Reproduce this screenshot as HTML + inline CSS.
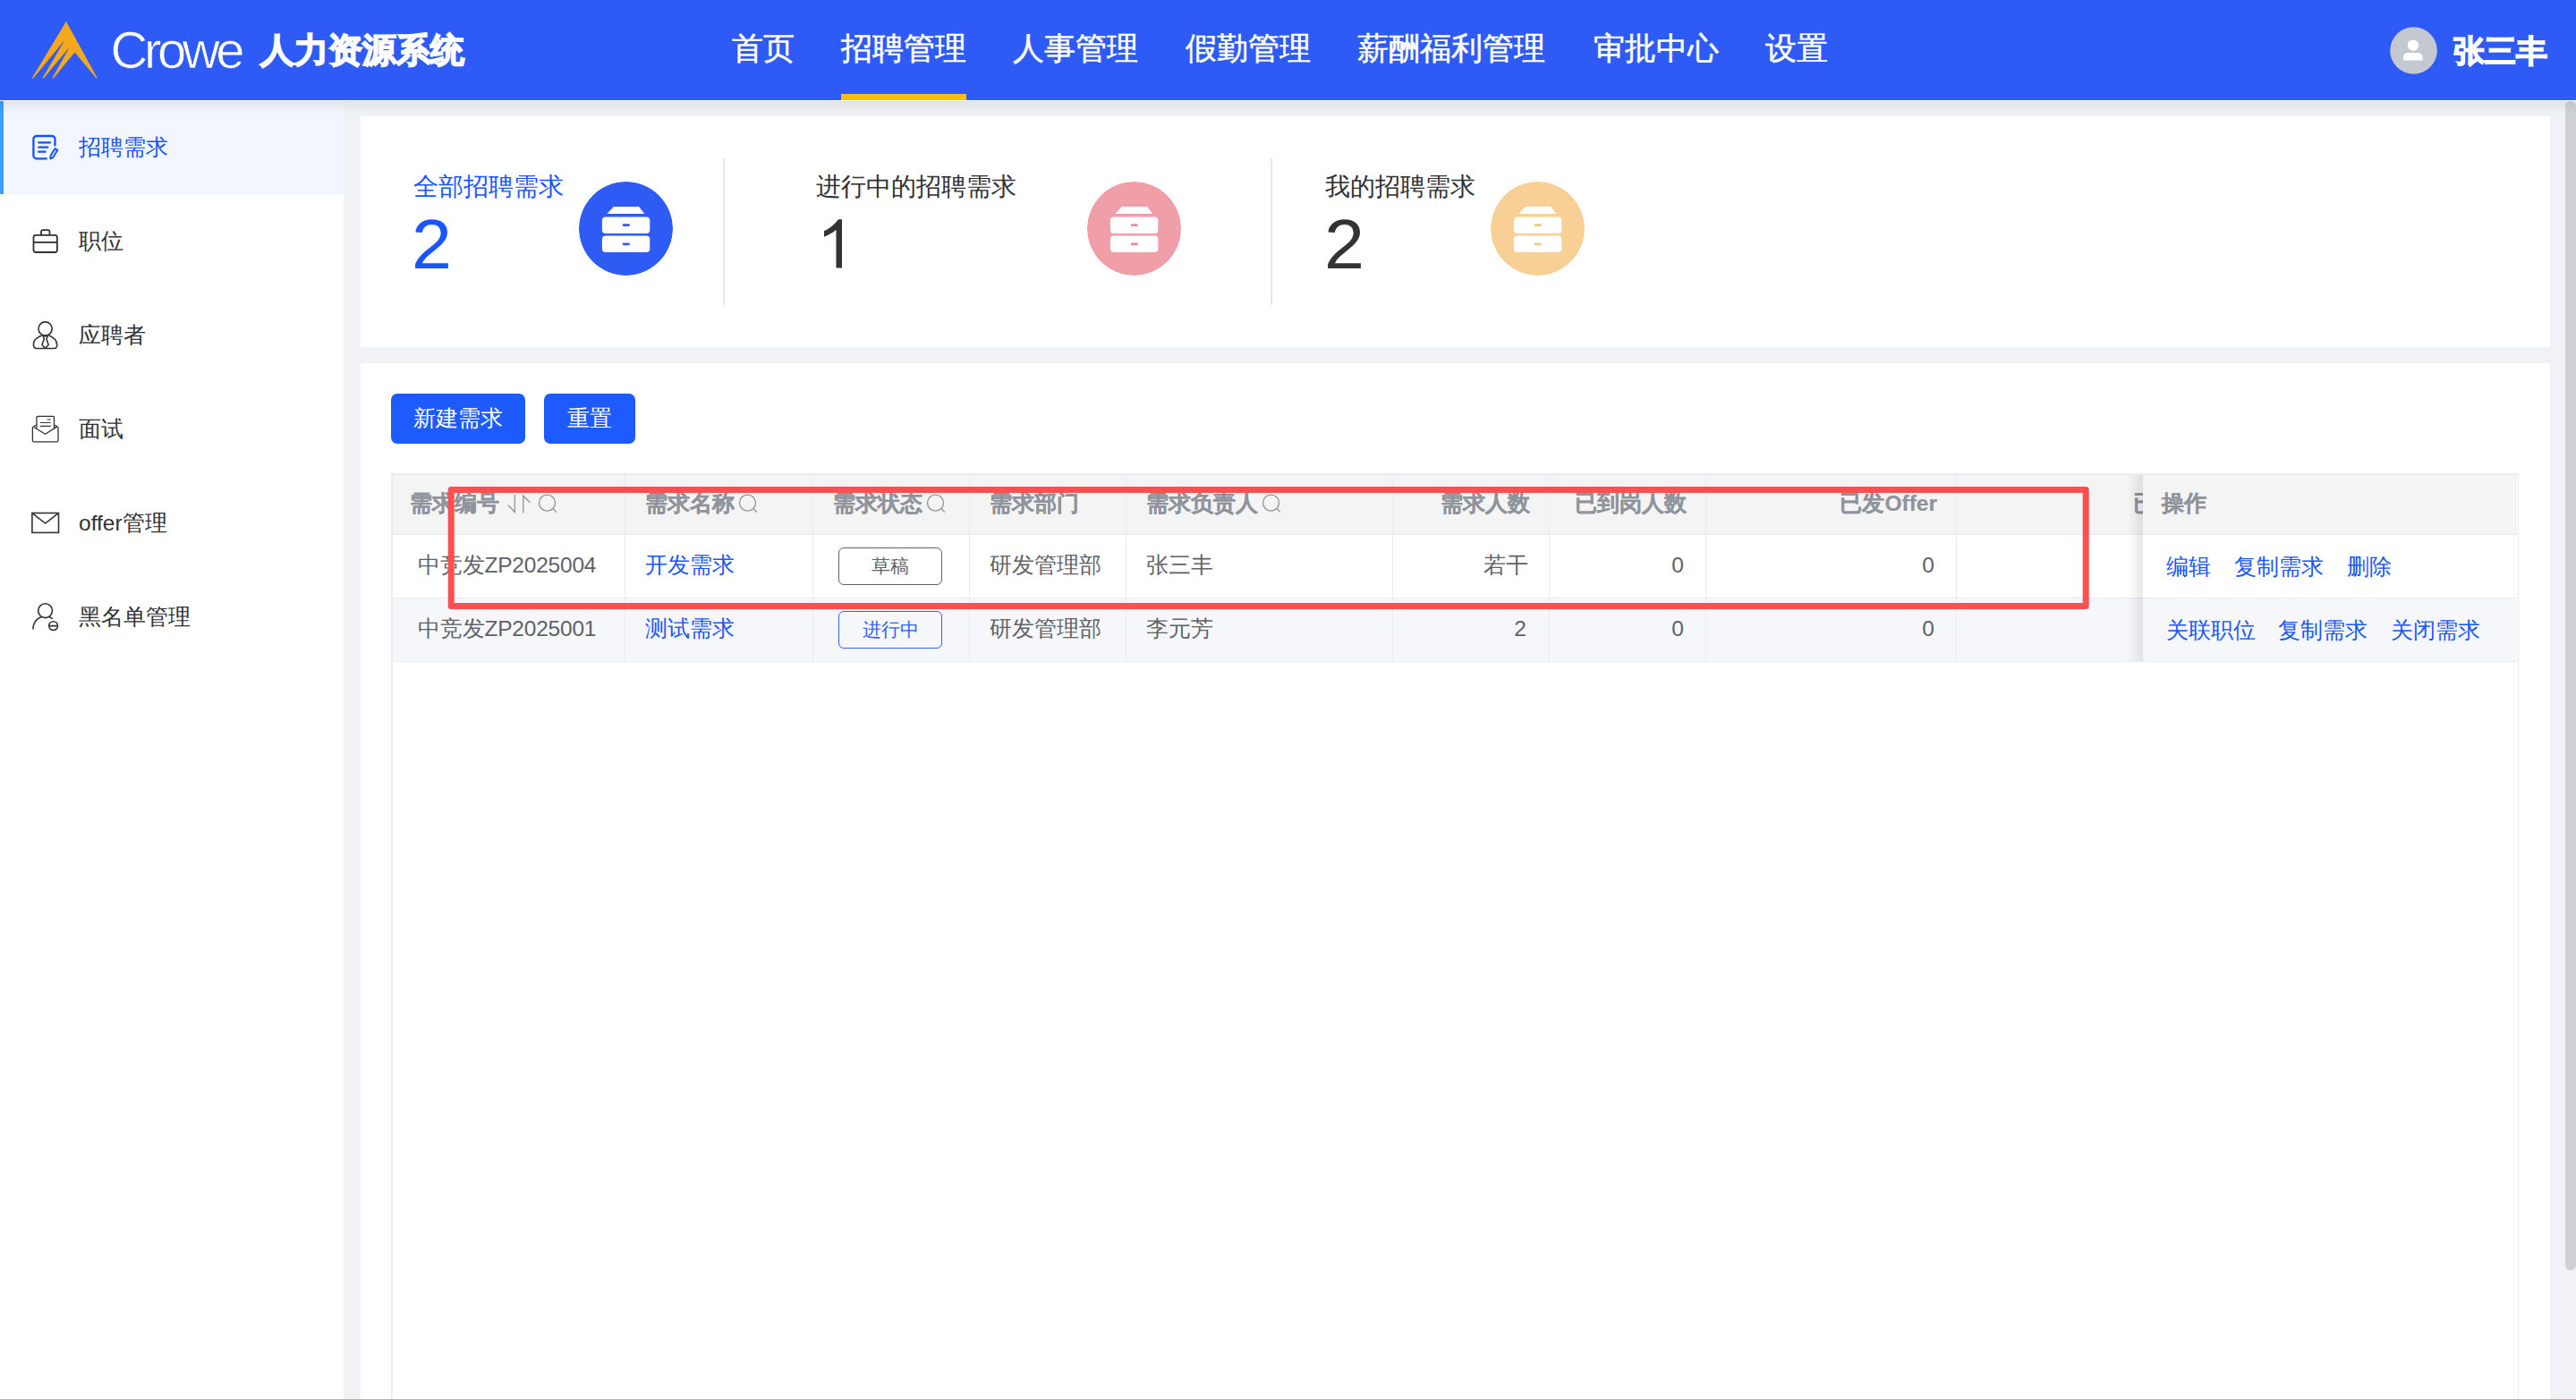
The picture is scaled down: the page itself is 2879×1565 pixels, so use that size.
<!DOCTYPE html>
<html><head><meta charset="utf-8">
<style>
*{box-sizing:border-box;margin:0;padding:0}
html,body{width:2879px;height:1565px;overflow:hidden;background:#f0f2f5;font-family:"Liberation Sans",sans-serif;}
.abs{position:absolute}
#hdr{position:absolute;left:0;top:0;width:2879px;height:112px;background:#2e5bf6;}
.nav{position:absolute;top:29px;font-size:35px;line-height:50px;color:#fff;white-space:nowrap;-webkit-text-stroke:0.5px #fff}
#shadow{position:absolute;left:0;top:112px;width:2879px;height:16px;background:linear-gradient(rgba(255,255,255,0.9) 0px,rgba(255,255,255,0.9) 1px,rgba(0,0,0,0.065) 1px,rgba(0,0,0,0) 16px);z-index:5}
#side{position:absolute;left:0;top:112px;width:384px;height:1453px;background:#fff}
.si{position:absolute;left:0;width:384px;height:105px}
.si .t{position:absolute;left:88px;top:0;line-height:105px;font-size:24.5px;color:#303133;white-space:nowrap}
.si svg{position:absolute;left:30px;width:45px;height:45px}
.card{position:absolute;left:403px;width:2447px;background:#fff}
.stt{position:absolute;font-size:28px;line-height:40px;color:#303133;white-space:nowrap}
.stn{position:absolute;font-size:78px;line-height:90px;color:#333;white-space:nowrap}
.circ{position:absolute;width:105px;height:105px;border-radius:50%}
.vd{position:absolute;width:2px;top:177px;height:164px;background:#e8e8e8}
.btn{position:absolute;top:440px;height:56px;border-radius:7px;background:#1e5bff;color:#fff;font-size:24.5px;line-height:56px;text-align:center}
.th{position:absolute;top:529px;height:68px;font-size:24.5px;font-weight:bold;color:#8f939b;line-height:68px;white-space:nowrap;-webkit-text-stroke:0.2px #8f939b}
.td{position:absolute;font-size:24.5px;color:#606266;line-height:70px;white-space:nowrap}
.lk{color:#1a56ff}
.vl{position:absolute;width:1px;background:#e8ebf3}
.hl{position:absolute;height:1px;background:#e8ebf3}
</style></head><body>
<div id="hdr">
  <svg class="abs" style="left:0;top:0" width="140" height="112" viewBox="0 0 140 112">
    <polygon fill="#f5a81c" points="74,24 108.9,87.6 107.7,87.6 83.6,58.6 59.8,87.6 58.3,87.6 77.8,52.6 48.8,87.6 47.3,87.6 72.7,44.2 37.2,87.6 35.6,87.6"/>
  </svg>
  <svg class="abs" style="left:0;top:0" width="300" height="112"><text x="123.5" y="76.2" font-family="Liberation Sans" font-size="58" textLength="150" lengthAdjust="spacing" fill="#fff" stroke="#2e5bf6" stroke-width="0.7">Crowe</text></svg>
  <div class="abs" style="left:291px;top:30.5px;font-size:37.8px;line-height:50px;color:#fff;font-weight:bold;-webkit-text-stroke:1.6px #fff">人力资源系统</div>
  <div class="nav" style="left:818px">首页</div>
  <div class="nav" style="left:940px">招聘管理</div>
  <div class="abs" style="left:940px;top:105px;width:140px;height:7px;background:#fcbf06"></div>
  <div class="nav" style="left:1132px">人事管理</div>
  <div class="nav" style="left:1325px">假勤管理</div>
  <div class="nav" style="left:1517px">薪酬福利管理</div>
  <div class="nav" style="left:1781px">审批中心</div>
  <div class="nav" style="left:1973px">设置</div>
  <svg class="abs" style="left:2671px;top:30px" width="53" height="53" viewBox="0 0 53 53">
    <circle cx="26.5" cy="26.5" r="26.3" fill="#c4c8d0"/>
    <circle cx="26" cy="20.7" r="6.2" fill="#fff"/>
    <path d="M15 37.5 V34 a5 5 0 0 1 5 -5 H31.5 a5 5 0 0 1 5 5 V37.5 Z" fill="#fff"/>
  </svg>
  <div class="abs" style="left:2741.5px;top:31.5px;font-size:35px;line-height:50px;color:#fff;font-weight:bold;-webkit-text-stroke:1.4px #fff">张三丰</div>
</div>
<div id="shadow"></div>
<div id="side">
  <div class="si" style="top:0;background:#f2f7ff"><div class="abs" style="left:0;top:0;width:4px;height:105px;background:#409eff"></div>
    <svg style="top:28px" viewBox="0 0 45 45" fill="none" stroke="#1652ff" stroke-width="2.3" stroke-linecap="round" stroke-linejoin="round">
      <path d="M31.5 22.5 V15.5 a3.5 3.5 0 0 0 -3.5 -3.5 H10.9 a3.5 3.5 0 0 0 -3.5 3.5 V33.8 a3.5 3.5 0 0 0 3.5 3.5 H21.9"/>
      <path d="M13.2 19.3 H26 M13.2 24.6 H23.3 M13.2 29.7 H20.6"/>
      <path d="M31.5 26 L34.3 27.8 L29.3 36 L26.4 37.3 L26.5 34.2 Z" stroke-width="2"/>
    </svg>
    <div class="t" style="color:#1652ff">招聘需求</div></div>
  <div class="si" style="top:105px">
    <svg style="top:28px" viewBox="0 0 45 45" fill="none" stroke="#2f3133" stroke-width="1.8">
      <rect x="7.5" y="17.8" width="26.4" height="19.2" rx="2.5"/>
      <path d="M7.5 25.9 H33.9"/>
      <path d="M16 17.8 V14.2 a2 2 0 0 1 2 -2 H23.5 a2 2 0 0 1 2 2 V17.8"/>
    </svg>
    <div class="t">职位</div></div>
  <div class="si" style="top:210px">
    <svg style="top:28px" viewBox="0 0 45 45" fill="none" stroke="#333" stroke-width="1.6" stroke-linejoin="round">
      <circle cx="20.6" cy="17.5" r="7.6"/>
      <path d="M17.4 24.7 C11 27 7 31 7.4 35.4 C7.6 38 9 39.5 11 39.5 H30.5 C32.5 39.5 34 38 33.8 35.4 C33.5 31 30 27 24.4 24.7"/>
      <path d="M18.3 25.8 H23.3 L21.9 29 L24.2 35.5 L20.6 39.2 L17 35.5 L19.3 29 Z"/>
    </svg>
    <div class="t">应聘者</div></div>
  <div class="si" style="top:315px">
    <svg style="top:28px" viewBox="0 0 45 45" fill="none" stroke="#333" stroke-width="1.3" stroke-linejoin="round">
      <path d="M10.9 24 V11.8 a1.5 1.5 0 0 1 1.5 -1.5 H29 a1.5 1.5 0 0 1 1.5 1.5 V24"/>
      <path d="M22.5 14 H26.7 M14.8 17.5 H26.7 M14.8 21.4 H26.7" stroke-width="1.2"/>
      <path d="M10.9 20 L7.3 22 a1.5 1.5 0 0 0 -0.9 1.4 V37.4 a1.5 1.5 0 0 0 1.5 1.5 H33.5 a1.5 1.5 0 0 0 1.5 -1.5 V23.4 a1.5 1.5 0 0 0 -0.9 -1.4 L30.5 20"/>
      <path d="M7.7 22.5 L20.6 30.2 L34 21.9"/>
    </svg>
    <div class="t">面试</div></div>
  <div class="si" style="top:420px">
    <svg style="top:28px" viewBox="0 0 45 45" fill="none" stroke="#333" stroke-width="1.6">
      <rect x="5.9" y="13.5" width="29.6" height="21.9"/>
      <path d="M6.4 13.8 L20.6 25.1 L35 13.8"/>
    </svg>
    <div class="t">offer管理</div></div>
  <div class="si" style="top:525px">
    <svg style="top:28px" viewBox="0 0 45 45" fill="none" stroke="#333" stroke-width="1.6" stroke-linecap="round">
      <circle cx="20.6" cy="17.7" r="7.9"/>
      <path d="M15.75 24.75 C10 27 7.2 32 6.9 37.9"/>
      <path d="M25.4 24.75 L28.3 26.4"/>
      <circle cx="29.6" cy="34.6" r="4.9"/>
      <path d="M25.7 34.6 H33.6"/>
    </svg>
    <div class="t">黑名单管理</div></div>
</div>

<div class="card" style="top:130px;height:258px"></div>
<div class="card" style="top:406px;height:1159px"></div>

<!-- stats -->
<div class="stt" style="left:462px;top:189px;color:#1a56ff">全部招聘需求</div>
<div class="stn" style="left:460px;top:228px;color:#1a56ff;transform:scaleX(1.035);transform-origin:0 0">2</div>
<svg class="circ" style="left:647px;top:203px" viewBox="0 0 105 105"><circle cx="52.5" cy="52.5" r="52.5" fill="#2f5bf5"/><g transform="translate(-2,-3)"><g fill="#fff"><path d="M40.9 31 H69.1 L75.4 38.9 H33.4 Z"/><rect x="27.9" y="42.4" width="53.4" height="18.5" rx="4"/><rect x="27.9" y="63.6" width="53.4" height="18.5" rx="4"/></g><g fill="#2f5bf5"><rect x="50.7" y="50.3" width="8.2" height="2.7" rx="1.3"/><rect x="50.7" y="71.5" width="8.2" height="2.7" rx="1.3"/></g></g></svg>
<div class="vd" style="left:808px"></div>
<div class="stt" style="left:912px;top:189px">进行中的招聘需求</div>
<svg class="abs" style="left:905px;top:235px" width="60" height="75" viewBox="0 0 60 75"><path fill="#333" d="M29.5 64.5 V22 C25 25.5 20.5 28 16 29.7 V23.3 C22 20.5 28.5 15 32.1 10.2 H36 V64.5 Z"/></svg>
<svg class="circ" style="left:1215px;top:203px" viewBox="0 0 105 105"><circle cx="52.5" cy="52.5" r="52.5" fill="#f09ea8"/><g transform="translate(-2,-3)"><g fill="#fff"><path d="M40.9 31 H69.1 L75.4 38.9 H33.4 Z"/><rect x="27.9" y="42.4" width="53.4" height="18.5" rx="4"/><rect x="27.9" y="63.6" width="53.4" height="18.5" rx="4"/></g><g fill="#ee8a96"><rect x="50.7" y="50.3" width="8.2" height="2.7" rx="1.3"/><rect x="50.7" y="71.5" width="8.2" height="2.7" rx="1.3"/></g></g></svg>
<div class="vd" style="left:1420px"></div>
<div class="stt" style="left:1481px;top:189px">我的招聘需求</div>
<div class="stn" style="left:1480px;top:228px;transform:scaleX(1.035);transform-origin:0 0">2</div>
<svg class="circ" style="left:1666px;top:203px" viewBox="0 0 105 105"><circle cx="52.5" cy="52.5" r="52.5" fill="#f8d095"/><g transform="translate(-2,-3)"><g fill="#fff"><path d="M40.9 31 H69.1 L75.4 38.9 H33.4 Z"/><rect x="27.9" y="42.4" width="53.4" height="18.5" rx="4"/><rect x="27.9" y="63.6" width="53.4" height="18.5" rx="4"/></g><g fill="#f5c57e"><rect x="50.7" y="50.3" width="8.2" height="2.7" rx="1.3"/><rect x="50.7" y="71.5" width="8.2" height="2.7" rx="1.3"/></g></g></svg>

<!-- buttons -->
<div class="btn" style="left:437px;width:150px">新建需求</div>
<div class="btn" style="left:608px;width:102px">重置</div>

<!-- table -->
<div class="abs" style="left:437px;top:529px;width:2378px;height:1036px;background:#fff;border-left:2px solid #e9edf6;border-right:1px solid #e9edf6;border-top:2px solid #e9edf6"></div>
<div class="abs" style="left:439px;top:531px;width:2374px;height:66px;background:#f4f4f5"></div>
<div class="abs" style="left:439px;top:668px;width:2374px;height:71px;background:#f5f7fb"></div>
<div class="hl" style="left:439px;top:597px;width:2374px"></div>
<div class="hl" style="left:439px;top:668px;width:2374px"></div>
<div class="hl" style="left:439px;top:739px;width:2374px"></div>
<div class="vl" style="left:698px;top:531px;height:208px"></div>
<div class="vl" style="left:908px;top:531px;height:208px"></div>
<div class="vl" style="left:1083px;top:531px;height:208px"></div>
<div class="vl" style="left:1258px;top:531px;height:208px"></div>
<div class="vl" style="left:1556px;top:531px;height:208px"></div>
<div class="vl" style="left:1731px;top:531px;height:208px"></div>
<div class="vl" style="left:1906px;top:531px;height:208px"></div>
<div class="vl" style="left:2186px;top:531px;height:208px"></div>

<div class="th" style="left:458px">需求编号</div>
<svg class="abs" style="left:560px;top:548px" width="70" height="30" viewBox="560 548 70 30" fill="none" stroke="#8f939b" stroke-width="1.3">
  <path d="M575.4 553 V572.5 L568 564.7"/>
  <path d="M584.8 573.6 V554 L592.4 561.8"/>
  <circle cx="611.5" cy="562.1" r="9"/>
  <path d="M618.2 568.8 L622 572.6"/>
</svg>
<div class="th" style="left:721px">需求名称</div>
<svg class="abs" style="left:820px;top:548px" width="35" height="30" viewBox="0 0 35 30" fill="none" stroke="#8f939b" stroke-width="1.3"><circle cx="15.5" cy="14.1" r="9"/><path d="M22.2 20.8 L26 24.6"/></svg>
<div class="th" style="left:931px">需求状态</div>
<svg class="abs" style="left:1030px;top:548px" width="35" height="30" viewBox="0 0 35 30" fill="none" stroke="#8f939b" stroke-width="1.3"><circle cx="15.5" cy="14.1" r="9"/><path d="M22.2 20.8 L26 24.6"/></svg>
<div class="th" style="left:1106px">需求部门</div>
<div class="th" style="left:1281px">需求负责人</div>
<svg class="abs" style="left:1405px;top:548px" width="35" height="30" viewBox="0 0 35 30" fill="none" stroke="#8f939b" stroke-width="1.3"><circle cx="15.5" cy="14.1" r="9"/><path d="M22.2 20.8 L26 24.6"/></svg>
<div class="th" style="left:1556px;width:154px;text-align:right">需求人数</div>
<div class="th" style="left:1731px;width:154px;text-align:right">已到岗人数</div>
<div class="th" style="left:1906px;width:259px;text-align:right">已发Offer</div>
<div class="th" style="left:2384px;width:11px;overflow:hidden">已</div>

<div class="td" style="left:467px;top:597px;letter-spacing:-0.2px">中竞发ZP2025004</div>
<div class="td lk" style="left:721px;top:597px">开发需求</div>
<div class="abs" style="left:937px;top:612px;width:116px;height:42px;border:1.5px solid #606266;border-radius:6px;font-size:21px;line-height:39px;text-align:center;color:#606266">草稿</div>
<div class="td" style="left:1106px;top:597px">研发管理部</div>
<div class="td" style="left:1281px;top:597px">张三丰</div>
<div class="td" style="left:1556px;top:597px;width:152px;text-align:right">若干</div>
<div class="td" style="left:1731px;top:597px;width:151px;text-align:right">0</div>
<div class="td" style="left:1906px;top:597px;width:256px;text-align:right">0</div>

<div class="td" style="left:467px;top:668px;letter-spacing:-0.2px">中竞发ZP2025001</div>
<div class="td lk" style="left:721px;top:668px">测试需求</div>
<div class="abs" style="left:937px;top:683px;width:116px;height:42px;border:1.5px solid #2d63f5;border-radius:6px;font-size:21px;line-height:39px;text-align:center;color:#2d63f5">进行中</div>
<div class="td" style="left:1106px;top:668px">研发管理部</div>
<div class="td" style="left:1281px;top:668px">李元芳</div>
<div class="td" style="left:1556px;top:668px;width:150px;text-align:right">2</div>
<div class="td" style="left:1731px;top:668px;width:151px;text-align:right">0</div>
<div class="td" style="left:1906px;top:668px;width:256px;text-align:right">0</div>

<!-- fixed column -->
<div class="abs" style="left:2378px;top:531px;width:17px;height:208px;background:linear-gradient(90deg,rgba(0,0,0,0),rgba(0,0,0,0.09))"></div>
<div class="abs" style="left:2395px;top:531px;width:418px;height:66px;background:#f4f4f5"></div>
<div class="abs" style="left:2395px;top:598px;width:418px;height:70px;background:#fff"></div>
<div class="abs" style="left:2395px;top:669px;width:418px;height:70px;background:#f5f7fb"></div>
<div class="th" style="left:2416px">操作</div>
<div class="td lk" style="left:2421px;top:599px">编辑</div>
<div class="td lk" style="left:2497px;top:599px">复制需求</div>
<div class="td lk" style="left:2623px;top:599px">删除</div>
<div class="td lk" style="left:2421px;top:670px">关联职位</div>
<div class="td lk" style="left:2546px;top:670px">复制需求</div>
<div class="td lk" style="left:2672px;top:670px">关闭需求</div>

<!-- red box -->
<svg class="abs" style="left:490px;top:530px" width="1860" height="165" viewBox="490 530 1860 165"><rect x="504.2" y="547.5" width="1827" height="130" fill="none" stroke="#fa5050" stroke-width="7" stroke-linejoin="round"/></svg>


<!-- scrollbar -->
<div class="abs" style="left:2867px;top:113px;width:12px;height:1307px;border-radius:6px;background:#d0d1d4"></div>
<div class="abs" style="left:0;top:1564px;width:2879px;height:1px;background:#b9aea9"></div>
</body></html>
